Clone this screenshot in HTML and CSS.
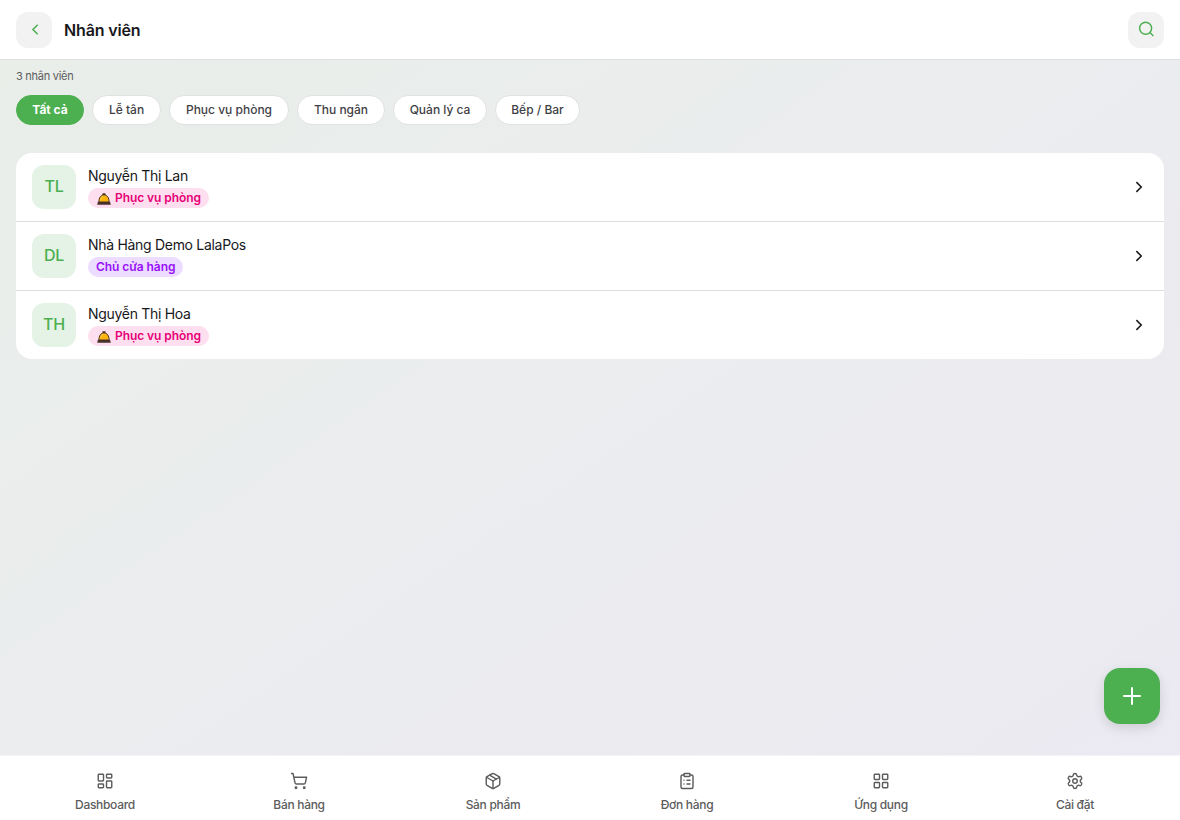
FILE: index.html
```html
<!DOCTYPE html>
<html lang="vi">
<head>
    <meta charset="UTF-8">
    <meta name="viewport" content="width=device-width, initial-scale=1.0">
    <title>Nhân viên</title>
    <link rel="stylesheet" href="styles.css">
</head>
<body>
    <!-- Shared icons -->
    <svg class="hidden">
        <symbol id="chevron" viewBox="0 0 24 24"><path d="m8.500 18.500 6.500-6.500-6.500-6.500"/></symbol>
        <symbol id="bell" viewBox="0 0 14 12">
            <path d="M5.500.2h3v2h-3z" fill="#4a3420"/>
            <path d="M1.900 9.200C1.900 4.800 3.800 1.900 7 1.900s5.100 2.900 5.100 7.300z" fill="#fdb50d" stroke="#4a3420" stroke-width="1"/>
            <path d="M4 6.800C4.200 5 5 3.700 6.200 3.300" fill="none" stroke="#ffd54a" stroke-width="1"/>
            <path d="M.9 8.700h12.200l.7 3.100H.2z" fill="#49302a"/>
        </symbol>
    </svg>

    <header class="header">
        <button class="icon-button" aria-label="Quay lại">
            <svg class="icon back-icon" viewBox="0 0 24 24"><path d="m16 18-6-6 6-6"/></svg>
        </button>
        <h1>Nhân viên</h1>
        <button class="icon-button search" aria-label="Tìm kiếm">
            <svg class="icon search-icon" viewBox="0 0 24 24"><circle cx="11.500" cy="11" r="8"/><path d="m21.800 21.300-4.600-4.600"/></svg>
        </button>
    </header>

    <main class="content">
        <p class="count">3 nhân viên</p>
        <div class="filters">
            <button class="chip active">Tất cả</button>
            <button class="chip chip-reception">Lễ tân</button>
            <button class="chip chip-service">Phục vụ phòng</button>
            <button class="chip chip-cashier">Thu ngân</button>
            <button class="chip chip-manager">Quản lý ca</button>
            <button class="chip chip-kitchen">Bếp / Bar</button>
        </div>

        <div class="staff-list">
            <div class="staff">
                <div class="avatar">TL</div>
                <div class="info">
                    <div class="name">Nguyễn Thị Lan</div>
                    <span class="badge service"><svg class="bell"><use href="#bell"/></svg>Phục vụ phòng</span>
                </div>
                <svg class="icon arrow"><use href="#chevron"/></svg>
            </div>
            <div class="staff">
                <div class="avatar">DL</div>
                <div class="info">
                    <div class="name">Nhà Hàng Demo LalaPos</div>
                    <span class="badge owner">Chủ cửa hàng</span>
                </div>
                <svg class="icon arrow"><use href="#chevron"/></svg>
            </div>
            <div class="staff">
                <div class="avatar">TH</div>
                <div class="info">
                    <div class="name">Nguyễn Thị Hoa</div>
                    <span class="badge service"><svg class="bell"><use href="#bell"/></svg>Phục vụ phòng</span>
                </div>
                <svg class="icon arrow"><use href="#chevron"/></svg>
            </div>
        </div>
    </main>

    <button class="add-button" aria-label="Thêm nhân viên">
        <svg class="icon" viewBox="0 0 24 24"><path d="M4.500 12h15M12 4.500v15"/></svg>
    </button>

    <nav class="bottom-nav">
        <a class="nav-item">
            <svg class="icon" viewBox="0 0 24 24"><rect x="3" y="3" width="7" height="9" rx="1"/><rect x="14" y="3" width="7" height="5" rx="1"/><rect x="14" y="12" width="7" height="9" rx="1"/><rect x="3" y="16" width="7" height="5" rx="1"/></svg>
            <span>Dashboard</span>
        </a>
        <a class="nav-item">
            <svg class="icon" viewBox="0 0 24 24"><circle cx="8" cy="21" r="1"/><circle cx="19" cy="21" r="1"/><path d="M2.050 2.050h2l2.660 12.420a2 2 0 0 0 2 1.580h9.780a2 2 0 0 0 1.950-1.570l1.650-7.430H5.120"/></svg>
            <span>Bán hàng</span>
        </a>
        <a class="nav-item">
            <svg class="icon" viewBox="0 0 24 24"><path d="M11 21.730a2 2 0 0 0 2 0l7-4A2 2 0 0 0 21 16V8a2 2 0 0 0-1-1.730l-7-4a2 2 0 0 0-2 0l-7 4A2 2 0 0 0 3 8v8a2 2 0 0 0 1 1.730z"/><path d="M12 22V12"/><path d="m3.300 7 8.700 5 8.700-5"/><path d="m7.500 4.270 9 5.150"/></svg>
            <span>Sản phẩm</span>
        </a>
        <a class="nav-item">
            <svg class="icon" viewBox="0 0 24 24"><rect x="8" y="2" width="8" height="4" rx="1"/><path d="M16 4h2a2 2 0 0 1 2 2v14a2 2 0 0 1-2 2H6a2 2 0 0 1-2-2V6a2 2 0 0 1 2-2h2"/><path d="M12 11h4M12 16h4M8 11h.01M8 16h.01"/></svg>
            <span>Đơn hàng</span>
        </a>
        <a class="nav-item">
            <svg class="icon" viewBox="0 0 24 24"><rect x="3" y="3" width="7" height="7" rx="1"/><rect x="14" y="3" width="7" height="7" rx="1"/><rect x="14" y="14" width="7" height="7" rx="1"/><rect x="3" y="14" width="7" height="7" rx="1"/></svg>
            <span>Ứng dụng</span>
        </a>
        <a class="nav-item">
            <svg class="icon" viewBox="0 0 24 24"><path d="M9.671 4.136a2.340 2.340 0 0 1 4.659 0 2.340 2.340 0 0 0 3.319 1.915 2.340 2.340 0 0 1 2.330 4.033 2.340 2.340 0 0 0 0 3.831 2.340 2.340 0 0 1-2.330 4.033 2.340 2.340 0 0 0-3.319 1.915 2.340 2.340 0 0 1-4.659 0 2.340 2.340 0 0 0-3.320-1.915 2.340 2.340 0 0 1-2.330-4.033 2.340 2.340 0 0 0 0-3.831A2.340 2.340 0 0 1 6.350 6.051a2.340 2.340 0 0 0 3.319-1.915"/><circle cx="12" cy="12" r="3"/></svg>
            <span>Cài đặt</span>
        </a>
    </nav>
</body>
</html>
```

FILE: styles.css
```css
* {
    box-sizing: border-box;
}

body {
    margin: 0;
    height: 100vh;
    display: flex;
    flex-direction: column;
    overflow: hidden;
    font-family: Inter, "Noto Sans", sans-serif;
    color: #18181b;
    background: linear-gradient(to bottom right, #e9eee9 0%, #eaedec 32%, #ebecef 55%, #ecebf0 78%, #ebe9f2 100%);
}

button {
    font-family: inherit;
    padding: 0;
    border: none;
    cursor: pointer;
}

.hidden {
    display: none;
}

.icon {
    display: block;
    fill: none;
    stroke: currentColor;
    stroke-width: 1.9;
    stroke-linecap: round;
    stroke-linejoin: round;
}

.header {
    display: flex;
    align-items: center;
    gap: 12px;
    height: 60px;
    padding: 0 16px;
    background-color: #fff;
    border-bottom: 1px solid #dedfe0;
}

.header h1 {
    margin: 0;
    font-size: 16px;
    font-weight: 600;
    letter-spacing: -0.15px;
}

.icon-button {
    display: flex;
    align-items: center;
    justify-content: center;
    width: 36px;
    height: 36px;
    padding-bottom: 1px;
    border-radius: 12px;
    background-color: #f2f2f2;
    color: #4caf50;
}

.search {
    margin-left: auto;
}

.back-icon,
.search-icon {
    width: 18px;
    height: 18px;
    stroke-linecap: butt;
    stroke-linejoin: miter;
}

.back-icon {
    width: 19px;
    height: 19px;
}

.content {
    flex: 1;
    padding: 8px 16px;
}

.count {
    margin: 0 0 11px;
    font-size: 11px;
    line-height: 16px;
    letter-spacing: -0.27px;
    color: #5c5c5c;
}

.filters {
    display: flex;
    gap: 8px;
    margin-bottom: 28px;
}

.chip {
    width: 68px;
    height: 30px;
    padding-bottom: 2px;
    border: 1px solid #e0e1e1;
    border-radius: 15px;
    background-color: #fff;
    color: #3f3f46;
    font-size: 12px;
    font-weight: 500;
    white-space: nowrap;
}

.chip.active {
    border-color: #4caf50;
    background-color: #4caf50;
    color: #fff;
    font-weight: 700;
}

.chip-reception {
    width: 69px;
}

.chip-service {
    width: 120px;
}

.chip-cashier {
    width: 88px;
}

.chip-manager {
    width: 94px;
}

.chip-kitchen {
    width: 85px;
}

.staff-list {
    border-radius: 16px;
    background-color: #fff;
    overflow: hidden;
}

.staff {
    display: flex;
    align-items: center;
    gap: 12px;
    padding: 12px 16px;
    border-bottom: 1px solid #dedede;
}

.staff:last-child {
    border-bottom: none;
}

.avatar {
    width: 44px;
    height: 44px;
    border-radius: 12px;
    background-color: #e4f3e5;
    color: #4caf50;
    font-size: 16px;
    font-weight: 500;
    line-height: 43px;
    letter-spacing: -0.2px;
    text-align: center;
}

.info {
    flex: 1;
    height: 44px;
}

.name {
    height: 23px;
    font-size: 14px;
    line-height: 22px;
    letter-spacing: -0.3px;
}

.badge {
    display: flex;
    align-items: center;
    height: 20px;
    padding: 0 8px 2px;
    border-radius: 10px;
    font-size: 12px;
    font-weight: 600;
    letter-spacing: -0.08px;
    white-space: nowrap;
}

.service {
    width: 121px;
    background-color: #fedff0;
    color: #e60076;
}

.owner {
    width: 95px;
    background-color: #ecdcff;
    color: #9810fa;
}

.bell {
    flex: none;
    width: 14px;
    height: 12px;
    margin: 4px 4px 0 1px;
}

.arrow {
    width: 18px;
    height: 18px;
    stroke-width: 2;
    stroke-linecap: butt;
    stroke-linejoin: miter;
}

.add-button {
    position: absolute;
    right: 20px;
    bottom: 96px;
    display: flex;
    align-items: center;
    justify-content: center;
    width: 56px;
    height: 56px;
    border-radius: 16px;
    background-color: #4caf50;
    color: #fff;
    box-shadow: 0 4px 12px rgba(0, 0, 0, 0.13);
}

.add-button .icon {
    width: 28px;
    height: 28px;
    stroke-width: 1.7;
    stroke-linecap: butt;
}

.bottom-nav {
    display: flex;
    height: 65px;
    padding: 16px 8px 0;
    background-color: #fff;
    border-top: 1px solid #f5f5f7;
}

.nav-item {
    flex: 1;
    display: flex;
    flex-direction: column;
    align-items: center;
    gap: 7px;
    color: #5c5c5c;
    font-size: 12px;
    font-weight: 500;
    line-height: 16px;
    letter-spacing: -0.3px;
}

.nav-item .icon {
    width: 18px;
    height: 18px;
}
```
